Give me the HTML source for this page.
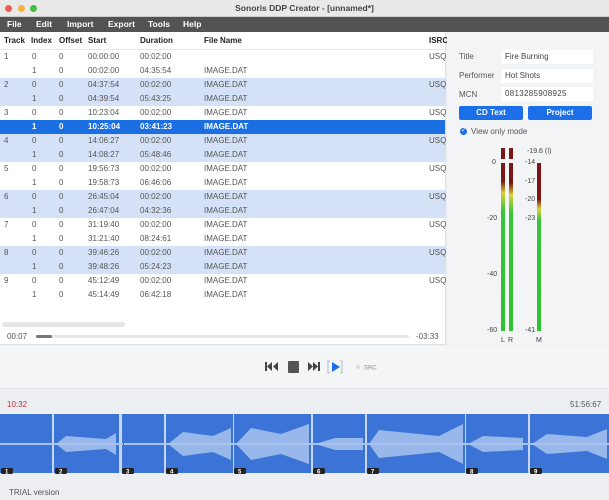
<!DOCTYPE html>
<html><head><meta charset="utf-8"><style>
*{margin:0;padding:0;box-sizing:border-box}
body{width:609px;height:500px;overflow:hidden;font-family:"Liberation Sans",sans-serif;font-size:8px;color:#333;background:#eceef2;position:relative}
.a{position:absolute;white-space:nowrap}
.row{position:absolute;left:0;width:445px;height:14px;line-height:14px;color:#555}
.row span{position:absolute}
.b{background:#d5e1f7}
.sel{background:#1b6fe3;color:#fff;font-weight:bold}
.c1{left:4px}.c2{left:32px}.c3{left:59px}.c4{left:88px}.c5{left:140px}.c6{left:204px}.c7{left:429px}
.lbl{font-size:7px;color:#444}
</style></head><body>
<div class="a" style="left:0;top:0;width:609px;height:17px;background:#e9e9e9;border-bottom:1px solid #ccc"></div>
<div class="a" style="left:5px;top:5px;width:7px;height:7px;border-radius:50%;background:#ee5a52"></div>
<div class="a" style="left:18px;top:5px;width:7px;height:7px;border-radius:50%;background:#f4b33b"></div>
<div class="a" style="left:30px;top:5px;width:7px;height:7px;border-radius:50%;background:#3fc03e"></div>
<div class="a" style="left:0;top:3px;width:609px;text-align:center;font-size:8.5px;font-weight:bold;color:#444">Sonoris DDP Creator - [unnamed*]</div>
<div class="a" style="left:0;top:17px;width:609px;height:15px;background:#535353;color:#fff;font-weight:bold;font-size:8.5px;line-height:15px">
<span class="a" style="left:7px">File</span><span class="a" style="left:36px">Edit</span><span class="a" style="left:67px">Import</span><span class="a" style="left:108px">Export</span><span class="a" style="left:148px">Tools</span><span class="a" style="left:183px">Help</span></div>
<div class="a" style="left:0;top:32px;width:446px;height:313px;background:#fff;border-right:1px solid #e0e0e0;border-bottom:1px solid #e0e0e0"></div>
<div class="row" style="top:34px;font-weight:bold;color:#222;border-bottom:1px solid #e6e6e6;height:16px"><span class="c1">Track</span><span style="left:31px">Index</span><span class="c3">Offset</span><span class="c4">Start</span><span class="c5">Duration</span><span class="c6">File Name</span><span class="c7">ISRC</span></div>
<div class="row" style="top:50px"><span class="c1">1</span><span class="c2">0</span><span class="c3">0</span><span class="c4">00:00:00</span><span class="c5">00:02:00</span><span class="c7">USQ</span></div>
<div class="row" style="top:64px"><span class="c2">1</span><span class="c3">0</span><span class="c4">00:02:00</span><span class="c5">04:35:54</span><span class="c6">IMAGE.DAT</span></div>
<div class="row b" style="top:78px"><span class="c1">2</span><span class="c2">0</span><span class="c3">0</span><span class="c4">04:37:54</span><span class="c5">00:02:00</span><span class="c6">IMAGE.DAT</span><span class="c7">USQ</span></div>
<div class="row b" style="top:92px"><span class="c2">1</span><span class="c3">0</span><span class="c4">04:39:54</span><span class="c5">05:43:25</span><span class="c6">IMAGE.DAT</span></div>
<div class="row" style="top:106px"><span class="c1">3</span><span class="c2">0</span><span class="c3">0</span><span class="c4">10:23:04</span><span class="c5">00:02:00</span><span class="c6">IMAGE.DAT</span><span class="c7">USQ</span></div>
<div class="row sel" style="top:120px"><span class="c2">1</span><span class="c3">0</span><span class="c4">10:25:04</span><span class="c5">03:41:23</span><span class="c6">IMAGE.DAT</span></div>
<div class="row b" style="top:134px"><span class="c1">4</span><span class="c2">0</span><span class="c3">0</span><span class="c4">14:06:27</span><span class="c5">00:02:00</span><span class="c6">IMAGE.DAT</span><span class="c7">USQ</span></div>
<div class="row b" style="top:148px"><span class="c2">1</span><span class="c3">0</span><span class="c4">14:08:27</span><span class="c5">05:48:46</span><span class="c6">IMAGE.DAT</span></div>
<div class="row" style="top:162px"><span class="c1">5</span><span class="c2">0</span><span class="c3">0</span><span class="c4">19:56:73</span><span class="c5">00:02:00</span><span class="c6">IMAGE.DAT</span><span class="c7">USQ</span></div>
<div class="row" style="top:176px"><span class="c2">1</span><span class="c3">0</span><span class="c4">19:58:73</span><span class="c5">06:46:06</span><span class="c6">IMAGE.DAT</span></div>
<div class="row b" style="top:190px"><span class="c1">6</span><span class="c2">0</span><span class="c3">0</span><span class="c4">26:45:04</span><span class="c5">00:02:00</span><span class="c6">IMAGE.DAT</span><span class="c7">USQ</span></div>
<div class="row b" style="top:204px"><span class="c2">1</span><span class="c3">0</span><span class="c4">26:47:04</span><span class="c5">04:32:36</span><span class="c6">IMAGE.DAT</span></div>
<div class="row" style="top:218px"><span class="c1">7</span><span class="c2">0</span><span class="c3">0</span><span class="c4">31:19:40</span><span class="c5">00:02:00</span><span class="c6">IMAGE.DAT</span><span class="c7">USQ</span></div>
<div class="row" style="top:232px"><span class="c2">1</span><span class="c3">0</span><span class="c4">31:21:40</span><span class="c5">08:24:61</span><span class="c6">IMAGE.DAT</span></div>
<div class="row b" style="top:246px"><span class="c1">8</span><span class="c2">0</span><span class="c3">0</span><span class="c4">39:46:26</span><span class="c5">00:02:00</span><span class="c6">IMAGE.DAT</span><span class="c7">USQ</span></div>
<div class="row b" style="top:260px"><span class="c2">1</span><span class="c3">0</span><span class="c4">39:48:26</span><span class="c5">05:24:23</span><span class="c6">IMAGE.DAT</span></div>
<div class="row" style="top:274px"><span class="c1">9</span><span class="c2">0</span><span class="c3">0</span><span class="c4">45:12:49</span><span class="c5">00:02:00</span><span class="c6">IMAGE.DAT</span><span class="c7">USQ</span></div>
<div class="row" style="top:288px"><span class="c2">1</span><span class="c3">0</span><span class="c4">45:14:49</span><span class="c5">06:42:18</span><span class="c6">IMAGE.DAT</span></div>
<div class="a" style="left:2px;top:322px;width:123px;height:5px;border-radius:3px;background:#e6e6e6"></div>
<div class="a" style="left:7px;top:332px;color:#555">00:07</div>
<div class="a" style="left:36px;top:335px;width:373px;height:3px;border-radius:2px;background:#e6e6e6"></div>
<div class="a" style="left:36px;top:335px;width:16px;height:3px;border-radius:2px;background:#777"></div>
<div class="a" style="left:416px;top:332px;color:#555">-03:33</div>
<div class="a" style="left:447px;top:32px;width:162px;height:313px;background:#f3f4f6"></div>
<div class="a" style="left:459px;top:52px;color:#555">Title</div>
<div class="a" style="left:501px;top:50px;width:92px;height:14px;background:#fff"></div><div class="a" style="left:505px;top:52px;color:#444">Fire Burning</div>
<div class="a" style="left:459px;top:71px;color:#555">Performer</div>
<div class="a" style="left:501px;top:69px;width:92px;height:14px;background:#fff"></div><div class="a" style="left:505px;top:71px;color:#444">Hot Shots</div>
<div class="a" style="left:459px;top:90px;color:#555">MCN</div>
<div class="a" style="left:501px;top:87px;width:92px;height:14px;background:#fff"></div><div class="a" style="left:505px;top:89px;color:#444;letter-spacing:.3px">0813285908925</div>
<div class="a" style="left:459px;top:106px;width:64px;height:14px;border-radius:2px;background:#1b6fe8;color:#fff;font-weight:bold;text-align:center;line-height:14px">CD Text</div>
<div class="a" style="left:528px;top:106px;width:64px;height:14px;border-radius:2px;background:#1b6fe8;color:#fff;font-weight:bold;text-align:center;line-height:14px">Project</div>
<div class="a" style="left:460px;top:128px;width:7px;height:7px;border-radius:50%;background:#1b6fe8;color:#fff;font-size:6px;line-height:7px;text-align:center">✓</div>
<div class="a" style="left:471px;top:127px;color:#555">View only mode</div>
<div class="a" style="left:501px;top:148px;width:4px;height:11px;background:#7a1616"></div>
<div class="a" style="left:509px;top:148px;width:4px;height:11px;background:#7a1616"></div>
<div class="a" style="left:501px;top:163px;width:4px;height:168px;background:linear-gradient(#7a1616 0,#7a1616 18px,#d8d234 30px,#38c43a 48px,#2fc22f 100%)"></div>
<div class="a" style="left:509px;top:163px;width:4px;height:168px;background:linear-gradient(#7a1616 0,#7a1616 20px,#d8d234 32px,#38c43a 50px,#2fc22f 100%)"></div>
<div class="a" style="left:537px;top:163px;width:4px;height:168px;background:linear-gradient(#7a1616 0,#7a1616 36px,#d8d234 46px,#38c43a 58px,#2fc22f 100%)"></div>
<div class="a lbl" style="left:492px;top:159px">0</div>
<div class="a lbl" style="left:487px;top:215px">-20</div>
<div class="a lbl" style="left:487px;top:271px">-40</div>
<div class="a lbl" style="left:487px;top:327px">-60</div>
<div class="a lbl" style="left:527px;top:148px">-19.6 (I)</div>
<div class="a lbl" style="left:525px;top:159px">-14</div>
<div class="a lbl" style="left:525px;top:178px">-17</div>
<div class="a lbl" style="left:525px;top:196px">-20</div>
<div class="a lbl" style="left:525px;top:215px">-23</div>
<div class="a lbl" style="left:525px;top:327px">-41</div>
<div class="a lbl" style="left:501px;top:337px">L</div><div class="a lbl" style="left:508px;top:337px">R</div><div class="a lbl" style="left:536px;top:337px">M</div>
<div class="a" style="left:0;top:346px;width:609px;height:43px;background:#f4f5f7;border-bottom:1px solid #e2e4e8"></div>
<svg class="a" style="left:262px;top:360px" width="120" height="14" viewBox="0 0 120 14">
<rect x="3" y="2" width="2" height="9" fill="#444"/><path d="M10 2v9L5 6.5zM16 2v9l-5-4.5z" fill="#444"/>
<rect x="26" y="1" width="11" height="12" rx="1" fill="#555"/>
<path d="M46 2v9l5-4.5zM51 2v9l5-4.5z" fill="#444"/><rect x="56" y="2" width="2" height="9" fill="#444"/>
<path d="M68 1h-2v12h2M78 1h2v12h-2" stroke="#9ab" fill="none" stroke-width=".8"/><path d="M70 2v10l8-5z" fill="#1b6fe8"/>
<circle cx="96" cy="7" r="2" fill="#ddd"/><text x="102" y="9.5" font-size="6" fill="#888" font-family="Liberation Sans">SRC</text>
</svg>
<div class="a" style="left:7px;top:400px;color:#c03030">10:32</div>
<div class="a" style="left:570px;top:400px;color:#555">51:56:67</div>
<svg class="a" style="left:0;top:414px" width="609" height="66" viewBox="0 0 609 66">
<rect x="0" y="0" width="609" height="59" fill="#c5d6f3"/>
<g fill="#3b74d6">
<rect x="0" y="0" width="52" height="59"/><rect x="54" y="0" width="65" height="59"/><rect x="122" y="0" width="42" height="59"/><rect x="166" y="0" width="67" height="59"/><rect x="234" y="0" width="77" height="59"/><rect x="313" y="0" width="52" height="59"/><rect x="367" y="0" width="98" height="59"/><rect x="466" y="0" width="62" height="59"/><rect x="530" y="0" width="79" height="59"/>
</g>
<g fill="#a9c3ee" opacity=".85">
<path d="M56 30l10-8 40 3 10-6v22l-10-6-40 3-10-8z"/>
<path d="M168 30l15-12 30 4 18-8v32l-18-8-30 4-15-12z"/>
<path d="M236 30l15-16 30 6 28-10v40l-28-10-30 6-15-16z"/>
<path d="M315 30l20-6 28 0v12l-28 0-20-6z"/>
<path d="M369 30l10-14 60 6 24-12v40l-24-12-60 6-10-14z"/>
<path d="M468 30l15-8 40 2v12l-40 2-15-8z"/>
<path d="M532 30l15-10 40 3 20-8v30l-20-8-40 3-15-10z"/>
</g>
<rect x="0" y="29" width="609" height="2" fill="#a9c3ee"/>
<rect x="123" y="-25" width="1" height="84" fill="#e04040"/>
<g fill="#222">
<rect x="1" y="54" width="12" height="6" rx="1.5"/><rect x="55" y="54" width="12" height="6" rx="1.5"/><rect x="122" y="54" width="12" height="6" rx="1.5"/><rect x="166" y="54" width="12" height="6" rx="1.5"/><rect x="234" y="54" width="12" height="6" rx="1.5"/><rect x="313" y="54" width="12" height="6" rx="1.5"/><rect x="367" y="54" width="12" height="6" rx="1.5"/><rect x="466" y="54" width="12" height="6" rx="1.5"/><rect x="530" y="54" width="12" height="6" rx="1.5"/>
</g>
<g fill="#fff" font-size="6" font-family="Liberation Sans" font-weight="bold">
<text x="5" y="59.5">1</text><text x="59" y="59.5">2</text><text x="126" y="59.5">3</text><text x="170" y="59.5">4</text><text x="238" y="59.5">5</text><text x="317" y="59.5">6</text><text x="371" y="59.5">7</text><text x="470" y="59.5">8</text><text x="534" y="59.5">9</text>
</g>
</svg>
<div class="a" style="left:9px;top:488px;color:#555">TRIAL version</div>
</body></html>
